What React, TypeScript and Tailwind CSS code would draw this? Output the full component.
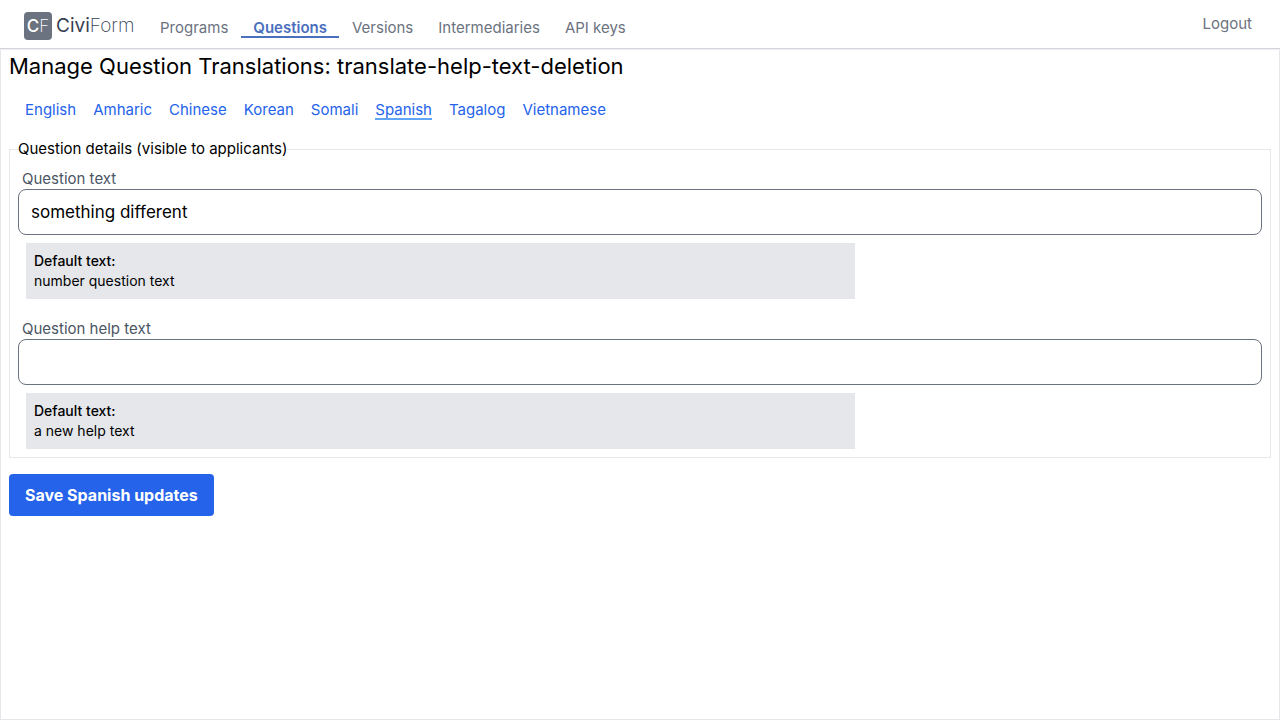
type FieldProps = {
  id: string;
  label: string;
  value: string;
  defaultText: string;
};

const navItems = ["Programs", "Questions", "Versions", "Intermediaries", "API keys"];

const languages = [
  "English",
  "Amharic",
  "Chinese",
  "Korean",
  "Somali",
  "Spanish",
  "Tagalog",
  "Vietnamese",
];

function Logo() {
  return (
    <a href="#" className="flex items-center gap-1 text-[19px] leading-7 text-[#374151]">
      <span className="flex size-7 items-center justify-center rounded bg-[#6b7280] text-[17px] text-white">
        <span className="font-medium">C</span>
        <span className="font-extralight">F</span>
      </span>
      <span>
        <span>Civi</span>
        <span className="font-extralight">Form</span>
      </span>
    </a>
  );
}

function Header() {
  return (
    <header className="relative z-10 flex h-12 items-start bg-white px-6 text-[#6b7280] shadow-[0_1px_0_#d1d5db,0_2px_1px_#f1f1f3]">
      <div className="w-[124px] pt-3">
        <Logo />
      </div>
      <nav className="flex gap-px pt-5">
        {navItems.map((item) => (
          <a
            key={item}
            href="#"
            className={
              item === "Questions"
                ? "border-b-2 border-[#4a6fbd] px-3 leading-4 font-semibold text-[#4a6fbd]"
                : "px-3 leading-4"
            }
          >
            {item}
          </a>
        ))}
      </nav>
      <a href="#" className="mt-3 mr-1 ml-auto leading-6">
        Logout
      </a>
    </header>
  );
}

function TranslationField({ id, label, value, defaultText }: FieldProps) {
  return (
    <div>
      <label htmlFor={id} className="block px-1 pt-1 leading-5 text-[#4b5563]">
        {label}
      </label>
      <input
        id={id}
        type="text"
        defaultValue={value}
        className="block h-[46px] w-full rounded-lg border border-[#6b7280] bg-white px-3 text-[17px] text-black outline-none"
      />
      <div className="mx-2 mt-2 w-2/3 bg-[#e5e7eb] p-2 text-[14px] leading-5">
        <p className="font-medium">Default text:</p>
        <p>{defaultText}</p>
      </div>
    </div>
  );
}

export default function App() {
  return (
    <div className="flex min-h-screen flex-col bg-white font-['Inter',sans-serif] text-[15px] text-black">
      <Header />
      <main className="grow border border-[#e5e7eb] px-2">
        <h1 className="mt-px text-[22px] leading-8">
          Manage Question Translations: translate-help-text-deletion
        </h1>
        <nav className="mt-5 flex gap-[17px] px-4">
          {languages.map((language) => (
            <a
              key={language}
              href="#"
              className={
                language === "Spanish"
                  ? "border-b-2 border-[#60a5fa] leading-4 text-[#2563eb]"
                  : "leading-4 text-[#2563eb]"
              }
            >
              {language}
            </a>
          ))}
        </nav>
        <form>
          <fieldset className="mt-[17px] border border-[#e5e7eb] px-2 pb-2">
            <legend className="leading-6">Question details (visible to applicants)</legend>
            <div className="flex flex-col gap-4 pt-1">
              <TranslationField
                id="question-text"
                label="Question text"
                value="something different"
                defaultText="number question text"
              />
              <TranslationField
                id="question-help-text"
                label="Question help text"
                value=""
                defaultText="a new help text"
              />
            </div>
          </fieldset>
          <button
            type="button"
            className="mt-4 rounded bg-[#2563eb] px-4 py-[9px] text-base leading-6 font-bold text-white"
          >
            Save Spanish updates
          </button>
        </form>
      </main>
    </div>
  );
}
